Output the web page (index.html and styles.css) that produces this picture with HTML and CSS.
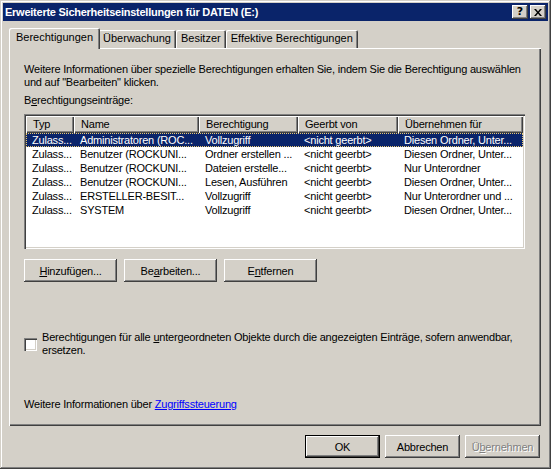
FILE: index.html
```html
<!DOCTYPE html>
<html lang="de">
<head>
    <meta charset="UTF-8">
    <title>Erweiterte Sicherheitseinstellungen für DATEN (E:)</title>
    <link rel="stylesheet" href="styles.css">
</head>
<body>
    <div class="window">
        <div class="titlebar">
            <span class="title">Erweiterte Sicherheitseinstellungen für DATEN (E:)</span>
            <div class="title-buttons">
                <button class="title-btn help">?</button>
                <button class="title-btn">
                    <svg width="8" height="7" viewBox="0 0 8 7">
                        <path d="M0 0h2l2 2.5 2-2.5h2L5 3.5 8 7H6L4 4.5 2 7H0l3-3.5z" fill="#000"/>
                    </svg>
                </button>
            </div>
        </div>

        <div class="dialog">
            <div class="tabs">
                <div class="tab active">Berechtigungen</div>
                <div class="tab">Überwachung</div>
                <div class="tab">Besitzer</div>
                <div class="tab">Effektive Berechtigungen</div>
            </div>

            <div class="panel">
                <p class="intro">Weitere Informationen über spezielle Berechtigungen erhalten Sie, indem Sie die Berechtigung auswählen<br>und auf "Bearbeiten" klicken.</p>
                <div class="label">B<u>e</u>rechtigungseinträge:</div>

                <div class="listview">
                    <div class="lv-header">
                        <div class="lv-col">Typ</div>
                        <div class="lv-col">Name</div>
                        <div class="lv-col">Berechtigung</div>
                        <div class="lv-col">Geerbt von</div>
                        <div class="lv-col">Übernehmen für</div>
                    </div>
                    <div class="lv-row selected">
                        <div class="lv-cell">Zulass...</div>
                        <div class="lv-cell">Administratoren (ROC...</div>
                        <div class="lv-cell">Vollzugriff</div>
                        <div class="lv-cell">&lt;nicht geerbt&gt;</div>
                        <div class="lv-cell">Diesen Ordner, Unter...</div>
                    </div>
                    <div class="lv-row">
                        <div class="lv-cell">Zulass...</div>
                        <div class="lv-cell">Benutzer (ROCKUNI...</div>
                        <div class="lv-cell">Ordner erstellen ...</div>
                        <div class="lv-cell">&lt;nicht geerbt&gt;</div>
                        <div class="lv-cell">Diesen Ordner, Unter...</div>
                    </div>
                    <div class="lv-row">
                        <div class="lv-cell">Zulass...</div>
                        <div class="lv-cell">Benutzer (ROCKUNI...</div>
                        <div class="lv-cell">Dateien erstelle...</div>
                        <div class="lv-cell">&lt;nicht geerbt&gt;</div>
                        <div class="lv-cell">Nur Unterordner</div>
                    </div>
                    <div class="lv-row">
                        <div class="lv-cell">Zulass...</div>
                        <div class="lv-cell">Benutzer (ROCKUNI...</div>
                        <div class="lv-cell">Lesen, Ausführen</div>
                        <div class="lv-cell">&lt;nicht geerbt&gt;</div>
                        <div class="lv-cell">Diesen Ordner, Unter...</div>
                    </div>
                    <div class="lv-row">
                        <div class="lv-cell">Zulass...</div>
                        <div class="lv-cell">ERSTELLER-BESIT...</div>
                        <div class="lv-cell">Vollzugriff</div>
                        <div class="lv-cell">&lt;nicht geerbt&gt;</div>
                        <div class="lv-cell">Nur Unterordner und ...</div>
                    </div>
                    <div class="lv-row">
                        <div class="lv-cell">Zulass...</div>
                        <div class="lv-cell">SYSTEM</div>
                        <div class="lv-cell">Vollzugriff</div>
                        <div class="lv-cell">&lt;nicht geerbt&gt;</div>
                        <div class="lv-cell">Diesen Ordner, Unter...</div>
                    </div>
                </div>

                <div class="button-row">
                    <button class="btn wide"><u>H</u>inzufügen...</button>
                    <button class="btn wide">Be<u>a</u>rbeiten...</button>
                    <button class="btn wide">E<u>n</u>tfernen</button>
                </div>

                <div class="check-row">
                    <span class="checkbox"></span>
                    <span class="check-text">Berechtigungen für alle <u>u</u>ntergeordneten Objekte durch die angezeigten Einträge, sofern anwendbar,<br>ersetzen.</span>
                </div>

                <div class="info">Weitere Informationen über <a href="#">Zugriffssteuerung</a></div>
            </div>

            <div class="footer">
                <button class="btn default">OK</button>
                <button class="btn">Abbrechen</button>
                <button class="btn disabled">Ü<u>b</u>ernehmen</button>
            </div>
        </div>
    </div>
</body>
</html>
```

FILE: styles.css
```css
body {
    margin: 0;
    background-color: #d4d0c8;
    font-family: "Liberation Sans", Arial, sans-serif;
    font-size: 11px;
    letter-spacing: -0.2px;
    color: #000;
}
.window {
    width: 551px;
    height: 469px;
    box-sizing: border-box;
    padding: 3px;
    background-color: #d4d0c8;
    box-shadow: inset -1px -1px #404040, inset 1px 1px #d4d0c8, inset -2px -2px #808080, inset 2px 2px #fff;
}
.titlebar {
    height: 18px;
    background-color: #0a246a;
    display: flex;
    align-items: center;
    justify-content: space-between;
    padding: 0 2px 0 2px;
}
.title {
    color: #fff;
    font-weight: bold;
    font-size: 11px;
    letter-spacing: -0.25px;
    white-space: nowrap;
}
.title-buttons {
    display: flex;
    gap: 2px;
}
.title-btn {
    width: 16px;
    height: 14px;
    padding: 0;
    border: none;
    background-color: #d4d0c8;
    box-shadow: inset -1px -1px #404040, inset 1px 1px #fff, inset -2px -2px #808080, inset 2px 2px #d4d0c8;
    display: flex;
    align-items: center;
    justify-content: center;
}
.title-btn.help {
    font: bold 11px "DejaVu Sans", sans-serif;
    line-height: 14px;
    padding-bottom: 1px;
}
.dialog {
    padding: 7px 7px 0 6px;
}
.tabs {
    display: flex;
    align-items: flex-end;
    height: 20px;
    padding-left: 2px;
}
.tab {
    height: 18px;
    line-height: 17px;
    padding: 0 5px;
    box-sizing: border-box;
    border-radius: 2px 2px 0 0;
    box-shadow: inset 1px 1px #fff, inset -1px 0 #404040, inset -2px 0 #808080;
    white-space: nowrap;
    letter-spacing: 0;
}
.tab.active {
    height: 21px;
    line-height: 19px;
    margin: 0 -2px -1px -2px;
    padding: 0 7px;
    position: relative;
    z-index: 1;
    background-color: #d4d0c8;
}
.panel {
    height: 378px;
    box-sizing: border-box;
    padding: 15px 15px 0 15px;
    box-shadow: inset 1px 1px #fff, inset -1px -1px #404040, inset -2px -2px #808080;
}
.intro {
    margin: 0;
    line-height: 13px;
    white-space: nowrap;
}
.label {
    margin-top: 5px;
    line-height: 13px;
}
.listview {
    margin-top: 7px;
    width: 501px;
    height: 135px;
    box-sizing: border-box;
    padding: 2px;
    background-color: #fff;
    box-shadow: inset 1px 1px #808080, inset 2px 2px #404040, inset -1px -1px #fff, inset -2px -2px #d4d0c8;
    overflow: hidden;
}
.lv-header,
.lv-row {
    display: grid;
    grid-template-columns: 48px 125px 99px 100px 125px;
}
.lv-col {
    height: 17px;
    line-height: 16px;
    padding-left: 7px;
    background-color: #d4d0c8;
    box-shadow: inset 1px 1px #fff, inset -1px -1px #404040, inset -2px -2px #808080;
    white-space: nowrap;
    overflow: hidden;
}
.lv-row {
    height: 14px;
    line-height: 14px;
}
.lv-cell {
    padding-left: 6px;
    white-space: nowrap;
    overflow: hidden;
}
.lv-row.selected {
    background-color: #0a246a;
    color: #fff;
    outline: 1px dotted #e8c872;
    outline-offset: -1px;
}
.button-row {
    display: flex;
    gap: 7px;
    margin-top: 10px;
}
.btn {
    width: 75px;
    height: 23px;
    padding: 0;
    border: none;
    background-color: #d4d0c8;
    box-shadow: inset -1px -1px #404040, inset 1px 1px #fff, inset -2px -2px #808080, inset 2px 2px #d4d0c8;
    font-family: "Liberation Sans", Arial, sans-serif;
    font-size: 11px;
    letter-spacing: -0.2px;
    color: #000;
}
.btn.wide {
    width: 93px;
}
.btn.default {
    box-shadow: inset 0 0 0 1px #000, inset -2px -2px #404040, inset 2px 2px #fff, inset -3px -3px #808080;
}
.btn.disabled {
    color: #808080;
    text-shadow: 1px 1px #fff;
}
.check-row {
    margin-top: 49px;
    display: flex;
    align-items: center;
    gap: 5px;
    line-height: 13px;
}
.check-text {
    white-space: nowrap;
}
.checkbox {
    flex: none;
    width: 13px;
    height: 13px;
    background-color: #fff;
    box-shadow: inset 1px 1px #808080, inset 2px 2px #404040, inset -1px -1px #fff, inset -2px -2px #d4d0c8;
}
.info {
    margin-top: 41px;
    line-height: 13px;
}
.info a {
    color: #0000ff;
}
.footer {
    display: flex;
    justify-content: flex-end;
    gap: 5px;
    padding-top: 9px;
    padding-right: 1px;
}
```
